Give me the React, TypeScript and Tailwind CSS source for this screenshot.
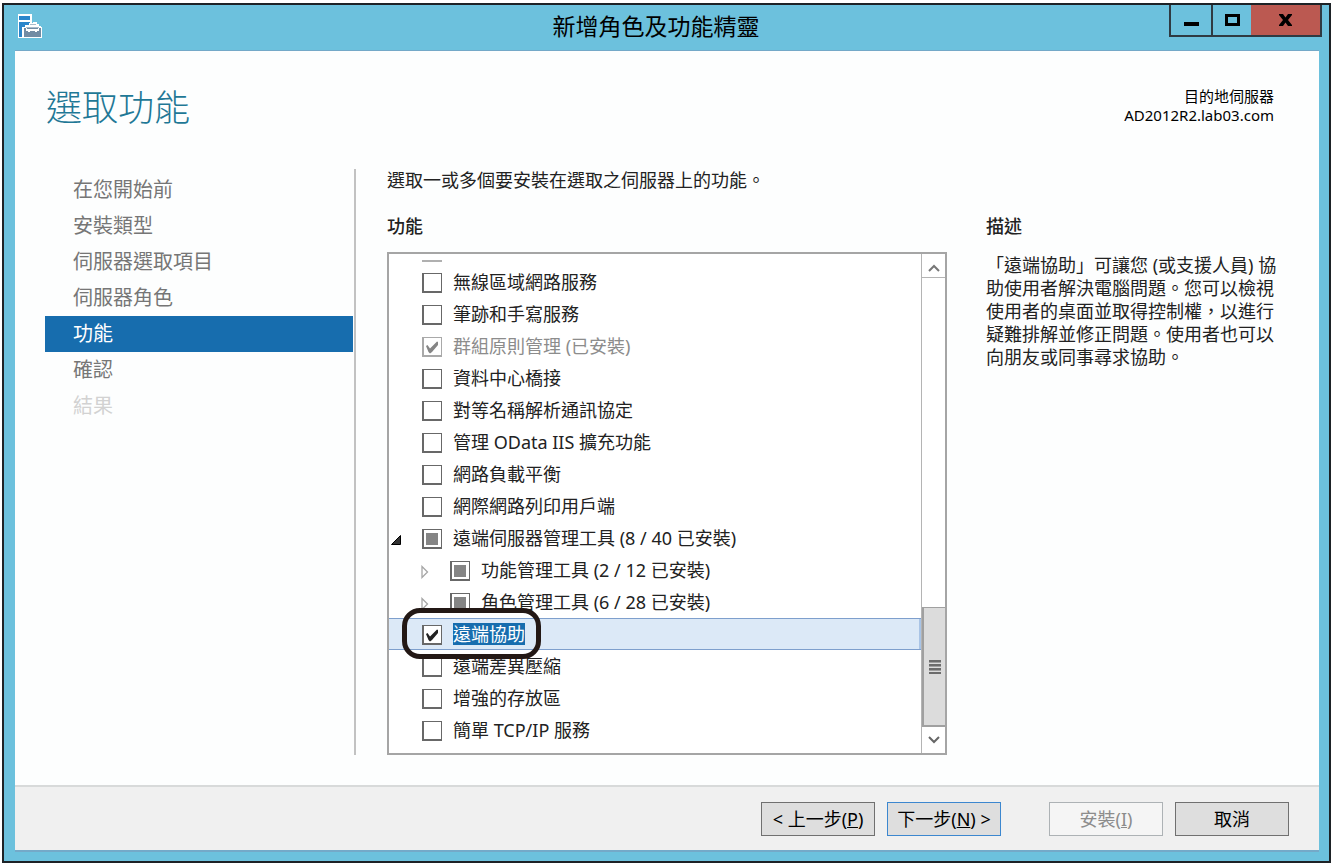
import { useState } from "react";
import clsx from "clsx";

type CheckState = "on" | "off" | "mixed";

interface Feature {
  id: string;
  label: string;
  state: CheckState;
  level?: number;
  expander?: "open" | "closed";
  disabled?: boolean;
}

const steps = [
  "在您開始前",
  "安裝類型",
  "伺服器選取項目",
  "伺服器角色",
  "功能",
  "確認",
  "結果",
];

const currentStep = 4;

const features: Feature[] = [
  { id: "wlan", label: "無線區域網路服務", state: "off" },
  { id: "ink", label: "筆跡和手寫服務", state: "off" },
  { id: "gpmc", label: "群組原則管理 (已安裝)", state: "on", disabled: true },
  { id: "dcb", label: "資料中心橋接", state: "off" },
  { id: "pnrp", label: "對等名稱解析通訊協定", state: "off" },
  { id: "odata", label: "管理 OData IIS 擴充功能", state: "off" },
  { id: "nlb", label: "網路負載平衡", state: "off" },
  { id: "ipp", label: "網際網路列印用戶端", state: "off" },
  { id: "rsat", label: "遠端伺服器管理工具 (8 / 40 已安裝)", state: "mixed", expander: "open" },
  { id: "rsat-feature", label: "功能管理工具 (2 / 12 已安裝)", state: "mixed", level: 1, expander: "closed" },
  { id: "rsat-role", label: "角色管理工具 (6 / 28 已安裝)", state: "mixed", level: 1, expander: "closed" },
  { id: "remote-assistance", label: "遠端協助", state: "on" },
  { id: "rdc", label: "遠端差異壓縮", state: "off" },
  { id: "storage", label: "增強的存放區", state: "off" },
  { id: "tcpip", label: "簡單 TCP/IP 服務", state: "off" },
];

const selectedId = "remote-assistance";

const ServerIcon = () => (
  <svg viewBox="0 0 24 24" className="h-6 w-6" aria-hidden="true">
    <path d="M0 0h14v9h1V8h4v2h2v2h2v1h1v11H0z" fill="#fff" />
    <path d="M1 2h11v4H1z" fill="#2b86cb" />
    <path d="M1 8h11v1h-1v2H7v2H4v10H1z" fill="#2b86cb" />
    <path d="M6 14h17v9H6z" fill="#728ca4" />
    <path d="M8 13h13v1H8zM12 10h6v1h-6z" fill="#a9bccb" />
    <path d="M8 14h13v3h-2v1h-2v-1h-5v1h-2v-1H8z" fill="#fff" />
    <path d="M9 14h11v1H9z" fill="#728ca4" />
  </svg>
);

const Expander = ({ open }: { open: boolean }) =>
  open ? (
    <svg viewBox="0 0 10 10" className="ml-0.5 mt-1 h-2.5 w-2.5" aria-hidden="true">
      <path d="M9.5 0.5v9h-9z" fill="#333" stroke="#000" />
    </svg>
  ) : (
    <svg viewBox="0 0 8 14" className="ml-1 mt-1 h-3.5 w-2" aria-hidden="true">
      <path d="M1 1.5v11l5.500-5.500z" fill="#fff" stroke="#a6a6a6" strokeWidth="1.300" />
    </svg>
  );

interface CheckBoxProps {
  id: string;
  state: CheckState;
  disabled?: boolean;
  onToggle: () => void;
}

const CheckBox = ({ id, state, disabled, onToggle }: CheckBoxProps) => (
  <span className="mt-0.5 grid h-5 w-5 shrink-0 place-items-center">
    <input
      id={id}
      type="checkbox"
      checked={state === "on"}
      disabled={disabled}
      onChange={onToggle}
      ref={(el) => {
        if (el) el.indeterminate = state === "mixed";
      }}
      className={clsx(
        "col-start-1 row-start-1 h-5 w-5 appearance-none border border-b-2 border-l-2 bg-white",
        disabled ? "border-[#a9a9a9]" : "border-[#686868]"
      )}
    />
    {state === "on" && (
      <svg
        viewBox="0 0 14 13"
        className="pointer-events-none col-start-1 row-start-1 h-[13px] w-3.5"
        aria-hidden="true"
      >
        <path
          d="M1 5l1.500-1L5 7.500 12 0.500l1 0.500v3L7 11l-2 1.500L3.500 11z"
          fill={disabled ? "#858585" : "#222"}
        />
      </svg>
    )}
    {state === "mixed" && (
      <span className="pointer-events-none col-start-1 row-start-1 h-3 w-3 bg-[#858585]" />
    )}
  </span>
);

const TitleBar = () => (
  <header className="flex h-[46px] items-start">
    <div className="w-[139px] shrink-0 pl-3.5 pt-[9px]">
      <ServerIcon />
    </div>
    <h1 className="flex-1 pt-1 text-center text-[23px] leading-[34px] text-black">
      新增角色及功能精靈
    </h1>
    <div className="mr-[7px] flex h-8 border-2 border-t-0 border-[#2f3a42]">
      <button type="button" aria-label="最小化" className="grid w-10 place-items-center">
        <span className="mt-2 h-1 w-[15px] bg-black" />
      </button>
      <button
        type="button"
        aria-label="最大化"
        className="grid w-10 place-items-center border-l-2 border-[#2f3a42]"
      >
        <span className="h-3 w-[15px] border-[3px] border-black" />
      </button>
      <button
        type="button"
        aria-label="關閉"
        className="grid w-[69px] place-items-center bg-[#bb5951]"
      >
        <svg viewBox="0 0 13 12" className="h-3 w-[13px]" aria-hidden="true">
          <path d="M0 0h4l2.500 3.500L9 0h4v1L9 6l4 5v1H9L6.500 8.500 4 12H0v-1l4-5-4-5z" fill="#000" />
        </svg>
      </button>
    </div>
  </header>
);

const StepList = () => (
  <nav className="w-[308px] shrink-0 pt-[3px]">
    <ol>
      {steps.map((step, i) => (
        <li key={step}>
          <a
            href="#"
            aria-current={i === currentStep ? "step" : undefined}
            className={clsx(
              "block h-9 pl-7 text-xl leading-9",
              i === currentStep && "bg-[#176dae] text-white",
              i < currentStep && "text-[#767676]",
              i === 5 && "text-[#767676]",
              i === 6 && "text-[#d2d2d2]"
            )}
          >
            {step}
          </a>
        </li>
      ))}
    </ol>
  </nav>
);

const ScrollBar = () => (
  <div className="flex w-6 shrink-0 flex-col border-l border-[#b4b4b4] bg-white">
    <button
      type="button"
      aria-label="向上捲動"
      className="grid h-6 place-items-center border-b border-[#b4b4b4]"
    >
      <svg viewBox="0 0 12 8" className="mt-1 h-2 w-3" aria-hidden="true">
        <path d="M1 7l5-5 5 5" fill="none" stroke="#777" strokeWidth="2" />
      </svg>
    </button>
    <div className="flex-1" />
    <div className="flex h-[120px] flex-col items-center justify-center gap-px border-2 border-t border-r-0 border-[#a0a0a0] bg-[#dcdcdc]">
      <span className="h-[3px] w-3 border-b border-[#a0a0a0] bg-[#6c6c6c]" />
      <span className="h-[3px] w-3 border-b border-[#a0a0a0] bg-[#6c6c6c]" />
      <span className="h-[3px] w-3 border-b border-[#a0a0a0] bg-[#6c6c6c]" />
      <span className="h-0.5 w-3 bg-[#6c6c6c]" />
    </div>
    <button type="button" aria-label="向下捲動" className="grid h-[26px] place-items-center">
      <svg viewBox="0 0 12 8" className="h-2 w-3" aria-hidden="true">
        <path d="M1 1l5 5 5-5" fill="none" stroke="#666" strokeWidth="2" />
      </svg>
    </button>
  </div>
);

interface FeatureRowProps {
  feature: Feature;
  state: CheckState;
  onToggle: () => void;
}

const FeatureRow = ({ feature, state, onToggle }: FeatureRowProps) => {
  const selected = feature.id === selectedId;

  return (
    <li
      className={clsx(
        "relative flex h-8 items-center",
        selected &&
          "bg-[#dce9f7] shadow-[inset_0_1px_0_#7e9fcd,inset_0_-1px_0_#7e9fcd,inset_-2px_0_0_#a9c4e6]",
        feature.level === 1 && "pl-7"
      )}
    >
      <span className="w-[33px] shrink-0">
        {feature.expander && <Expander open={feature.expander === "open"} />}
      </span>
      <CheckBox id={feature.id} state={state} disabled={feature.disabled} onToggle={onToggle} />
      <label
        htmlFor={feature.id}
        className={clsx(
          "ml-[11px] whitespace-nowrap text-lg leading-[22px]",
          selected && "bg-[#176dae] text-white",
          feature.disabled && "text-[#8c8c8c]"
        )}
      >
        {feature.label}
      </label>
      {selected && (
        <span className="pointer-events-none absolute -top-2.5 left-[13px] z-10 h-[51px] w-[139px] rounded-[18px] border-[5px] border-[#231815]" />
      )}
    </li>
  );
};

const FeatureList = () => {
  const [states, setStates] = useState<Record<string, CheckState>>(() =>
    Object.fromEntries(features.map((f) => [f.id, f.state]))
  );

  const toggle = (id: string) =>
    setStates((prev) => ({ ...prev, [id]: prev[id] === "on" ? "off" : "on" }));

  return (
    <div className="flex border-2 border-[#a5a5a5] bg-white">
      <ul className="min-w-0 flex-1 pb-[7px]">
        {/* bottom edge of the row scrolled out above */}
        <li className="h-3 pl-[33px] pt-1.5" aria-hidden="true">
          <span className="block h-0.5 w-5 bg-[#b0b0b0]" />
        </li>
        {features.map((feature) => (
          <FeatureRow
            key={feature.id}
            feature={feature}
            state={states[feature.id]}
            onToggle={() => toggle(feature.id)}
          />
        ))}
      </ul>
      <ScrollBar />
    </div>
  );
};

const buttonBase = "h-[34px] w-[114px] border text-lg leading-8";

const Footer = () => (
  <footer className="flex h-[65px] justify-end border-t-2 border-[#d8dada] bg-[#f0f0f0] pr-[30px] pt-[15px]">
    <button
      type="button"
      className={clsx(buttonBase, "mr-3 border-[#707070] bg-[#dedede] text-black")}
    >
      &lt; 上一步(<u>P</u>)
    </button>
    <button
      type="button"
      className={clsx(buttonBase, "mr-12 border-[#3c87cf] bg-[#dedede] text-black")}
    >
      下一步(<u>N</u>) &gt;
    </button>
    <button
      type="button"
      disabled
      className={clsx(buttonBase, "mr-3 border-[#adb2b5] bg-[#f5f5f5] text-[#8c8c8c]")}
    >
      安裝(<u>I</u>)
    </button>
    <button type="button" className={clsx(buttonBase, "border-[#707070] bg-[#dedede] text-black")}>
      取消
    </button>
  </footer>
);

const App = () => (
  <div className="bg-white pb-[3px] pl-0.5 pr-[3px] pt-[3px] font-['Noto_Sans','Noto_Sans_CJK_TC',sans-serif] text-[#222]">
    <div className="border-2 border-[#1d2226] bg-[#6cc1dd]">
      <TitleBar />
      <div className="mb-[11px] ml-[11px] mr-2.5 bg-[#fdfefe] shadow-[0_-1px_0_#74a9c8,0_2px_0_#74a9c8]">
        <main className="pb-[30px] pl-[31px] pr-[39px]">
          <div className="flex h-[118px] items-start justify-between">
            <h2 className="pt-[35px] text-4xl font-light leading-[44px] text-[#1f7896]">
              選取功能
            </h2>
            <p className="pr-1.5 pt-9 text-right text-[15px] leading-[19px] text-black">
              目的地伺服器
              <br />
              AD2012R2.lab03.com
            </p>
          </div>
          <div className="-ml-px flex">
            <StepList />
            <div className="w-[3px] shrink-0 border-r-2 border-[#c2c2c2]" />
            <section className="ml-[31px] min-w-0 flex-1">
              <p className="whitespace-nowrap text-lg leading-[22px]">
                選取一或多個要安裝在選取之伺服器上的功能。
              </p>
              <h3 className="mb-3.5 mt-[23px] text-lg font-medium leading-6">功能</h3>
              <FeatureList />
            </section>
            <aside className="ml-[39px] w-[294px] shrink-0 pt-[45px]">
              <h3 className="mb-4 text-lg font-medium leading-6">描述</h3>
              <p className="text-lg leading-[23px]">
                「遠端協助」可讓您 (或支援人員) 協助使用者解決電腦問題。您可以檢視使用者的桌面並取得控制權，以進行疑難排解並修正問題。使用者也可以向朋友或同事尋求協助。
              </p>
            </aside>
          </div>
        </main>
        <Footer />
      </div>
    </div>
  </div>
);

export default App;
